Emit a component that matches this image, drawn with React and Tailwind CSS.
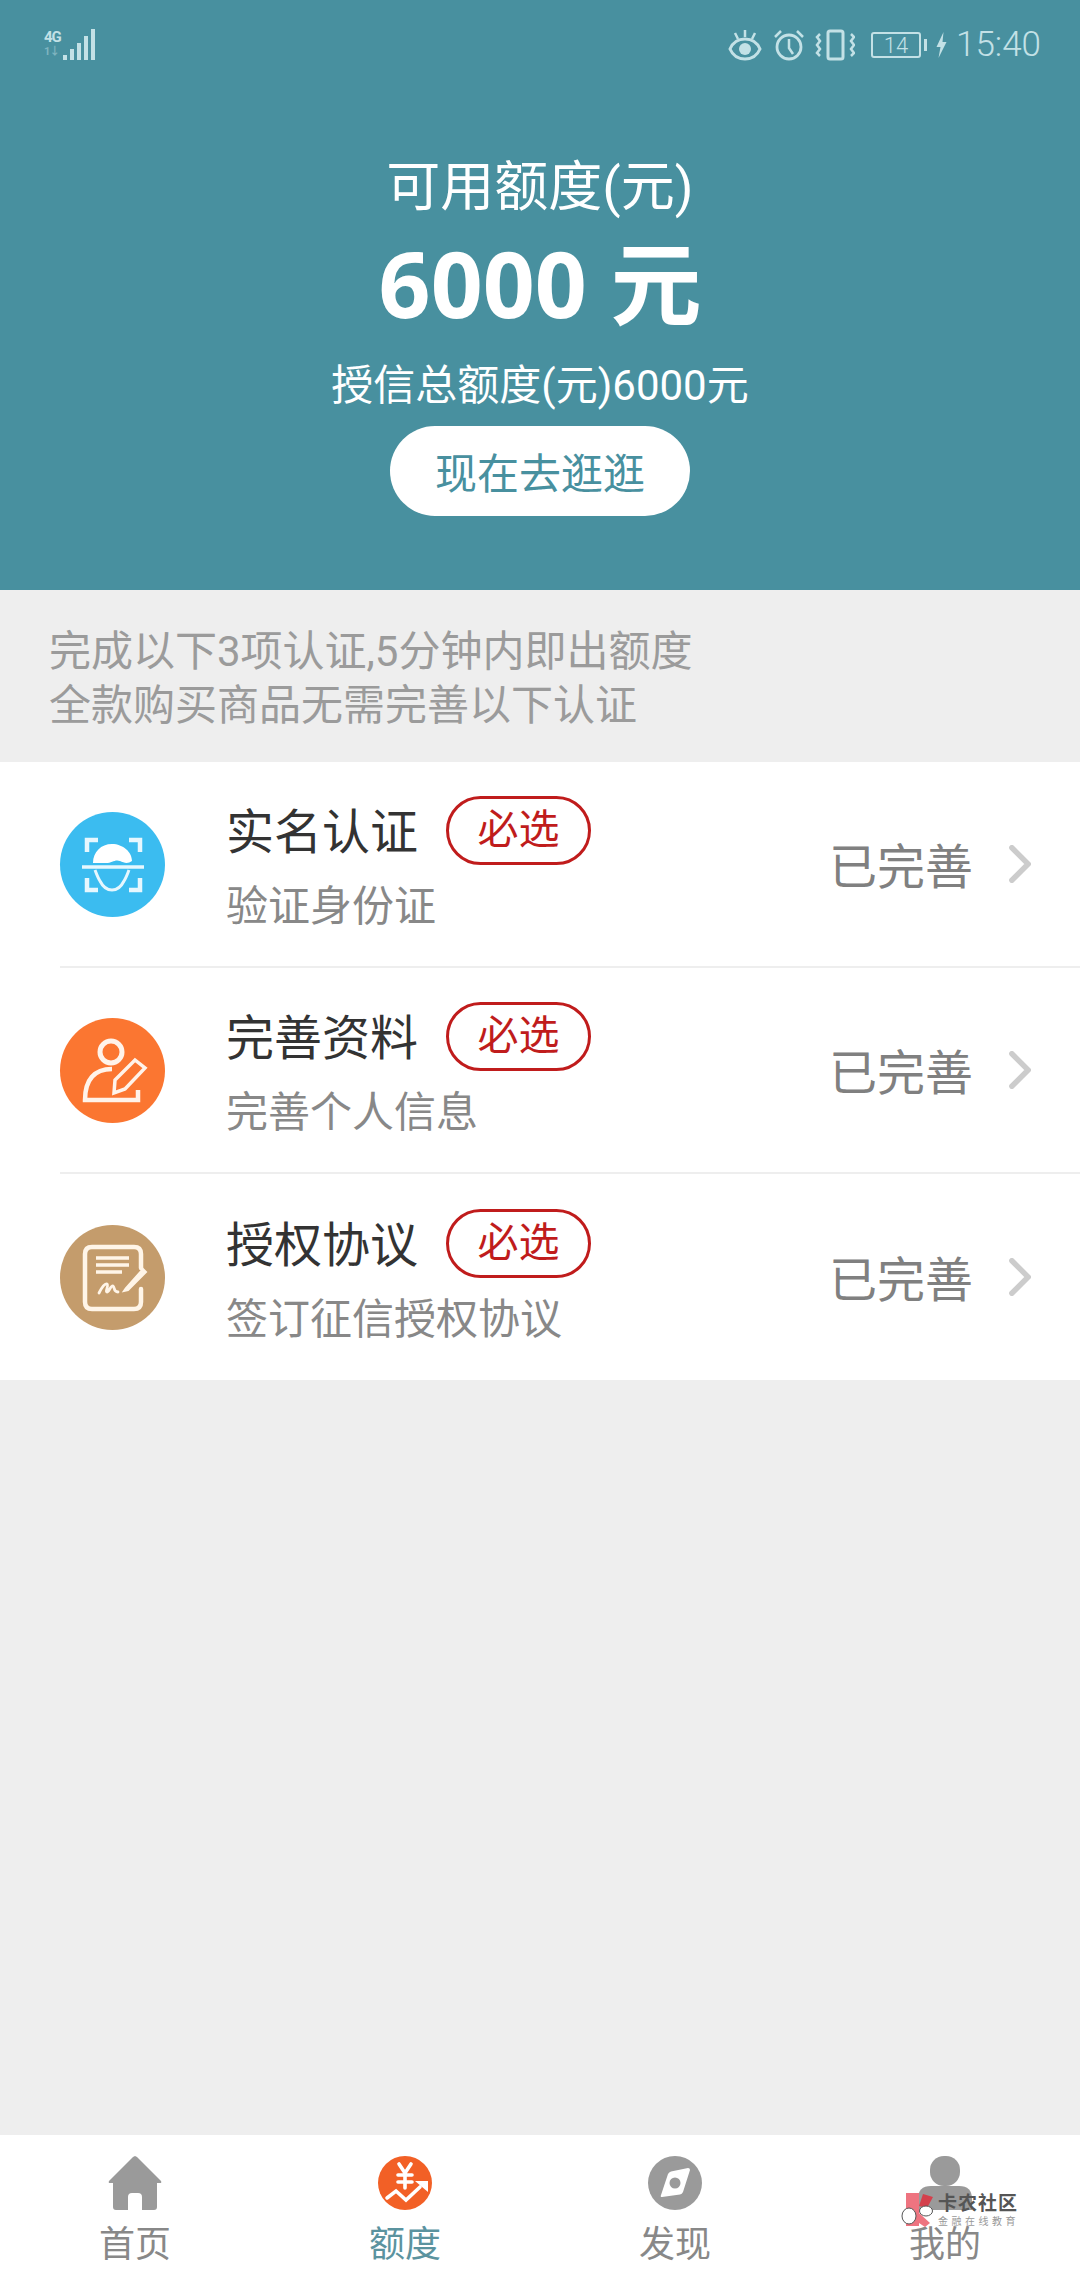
import React from "react";

const rows = [
  { title: "实名认证", sub: "验证身份证", icon: FaceIcon, color: "bg-[#3bbcf0]" },
  { title: "完善资料", sub: "完善个人信息", icon: ProfileIcon, color: "bg-[#fb7631]" },
  { title: "授权协议", sub: "签订征信授权协议", icon: SignIcon, color: "bg-[#c49c6c]" },
];

const tabs = [
  { label: "首页", icon: HomeTab },
  { label: "额度", icon: QuotaTab, active: true },
  { label: "发现", icon: CompassTab },
  { label: "我的", icon: UserTab },
];

function FaceIcon() {
  return (
    <svg viewBox="0 0 105 105" className="w-[105px] h-[105px]" fill="none" stroke="#e6f7fe" strokeWidth="4.500">
      <path d="M38 28H27v12M69 28h11v12M27 66v12h11M80 66v12H69" />
      <path d="M33 51c0-11 8-19 19-19s20 8 20 17c-4 3-8 2-12 0-5-2-8 2-14 2z" fill="#fff" stroke="none" />
      <path d="M22 55h62" strokeWidth="3.500" />
      <path d="M35 58c2 5 3 8 5 11 3 6 7 9 12 9s9-3 12-9c2-3 3-6 5-11" strokeWidth="3" />
    </svg>
  );
}

function ProfileIcon() {
  return (
    <svg viewBox="0 0 105 105" className="w-[105px] h-[105px]" fill="none" stroke="#fff3ea" strokeWidth="4.500">
      <circle cx="51" cy="34" r="11" strokeWidth="5" />
      <path d="M52 51c-18 0-27 11-27 31h53V72" />
      <path d="M55 62l20-20 10 8-20 21-11 4z" strokeWidth="3.500" />
    </svg>
  );
}

function SignIcon() {
  return (
    <svg viewBox="0 0 105 105" className="w-[105px] h-[105px]" fill="none" stroke="#fff5e8" strokeWidth="4.500">
      <path d="M81 43V29q0-7-7-7H32q-7 0-7 7v48q0 7 7 7h42q7 0 7-7V64" strokeLinecap="round" />
      <path d="M36 33h33M36 40h33M36 47h26" strokeWidth="3.500" />
      <path d="M39 68c3-6 6-10 8-9s-2 8 0 8 4-7 6-6 0 6 5 6" strokeWidth="2.800" strokeLinecap="round" />
      <path d="M66 63l-2 3 4-1 18-18-3-3z" fill="#fff5e8" strokeWidth="2" />
    </svg>
  );
}

function HomeTab() {
  return (
    <svg viewBox="0 0 54 54" className="w-[54px] h-[54px]" fill="#9a9a9a">
      <path d="M27 0l-2 1L1 25q-1 2 1 2h3v24q0 3 3 3h12V41q0-4 4-4h6q4 0 4 4v13h12q3 0 3-3V27h3q2 0 1-2L29 1z" />
    </svg>
  );
}

function QuotaTab() {
  return (
    <svg viewBox="0 0 54 54" className="w-[54px] h-[54px]" fill="none" stroke="#fff">
      <circle cx="27" cy="27" r="27" fill="#f26026" stroke="none" />
      <path d="M21 8l6 9 6-9M20 19h14M20 26h14M27 17v15" strokeWidth="3.600" strokeLinecap="round" />
      <path d="M9 42l9-7 10 9 14-13" strokeWidth="3.600" strokeLinecap="round" />
      <path d="M37 25h13v11z" fill="#fff" stroke="none" />
    </svg>
  );
}

function CompassTab() {
  return (
    <svg viewBox="0 0 54 54" className="w-[54px] h-[54px]">
      <circle cx="27" cy="27" r="27" fill="#9a9a9a" />
      <path d="M42 14L35 36q-1 2-3 2.500L14 41q-2 0-1-2l7-21q1-2 3-2.500L40 12q2 0 2 2z" fill="#fff" />
      <circle cx="27" cy="27" r="5.500" fill="#9a9a9a" />
    </svg>
  );
}

function UserTab() {
  return (
    <svg viewBox="0 0 54 54" className="w-[54px] h-[54px]" fill="#9a9a9a">
      <rect x="12" y="0" width="30" height="30" rx="14" />
      <path d="M13 30h28q13 0 13 13v11H0V43q0-13 13-13z" />
    </svg>
  );
}

function StatusIcons() {
  return (
    <svg viewBox="0 0 127 32" className="w-[127px] h-[32px]" fill="none" stroke="#c3e1e6" strokeWidth="2.500">
      {/* eye */}
      <path d="M2 20c3-7 9-10 15-10s12 3 15 10c-3 7-9 10-15 10S5 27 2 20z" strokeWidth="3" />
      <circle cx="17" cy="20" r="6" fill="#c3e1e6" stroke="none" />
      <path d="M17 1v7M7 4l3 6M27 4l-3 6" />
      {/* alarm */}
      <circle cx="61" cy="18" r="12" strokeWidth="2.800" />
      <path d="M61 10v9l4 6M47 8l6-6M75 8l-6-6" />
      {/* vibrate */}
      <rect x="100" y="2" width="15" height="28" rx="2" strokeWidth="3" />
      <path d="M92 5l-3 3 3 4-3 4 3 4-3 4 3 3M123 5l3 3-3 4 3 4-3 4 3 4-3 3" />
    </svg>
  );
}

function Watermark() {
  return (
    <div className="absolute left-[901px] top-[2193px] flex items-start gap-[5px]">
      <svg viewBox="0 0 32 34" className="w-[32px] h-[34px]">
        <path d="M5 0h13v33H5z" fill="#ee7480" />
        <path d="M18 13L22 1l10 3-6 11z" fill="#d4404c" />
        <path d="M18 20l11 10-5 4-6-4z" fill="#ee7480" />
        <ellipse cx="8" cy="23" rx="7" ry="8" fill="#fff" stroke="#555" strokeWidth="1" />
        <ellipse cx="25" cy="18" rx="6.500" ry="5" fill="#fff" stroke="#555" strokeWidth="1" />
      </svg>
      <div className="flex flex-col items-start pt-[1px]">
        <span className="text-[19px] leading-[20px] font-bold tracking-[1px] text-[#555]">卡农社区</span>
        <span className="mt-[2px] text-[10px] leading-[12px] tracking-[3.500px] text-[#999]">金融在线教育</span>
      </div>
    </div>
  );
}

export default function App() {
  return (
    <div className="relative w-[1080px] h-[2280px] flex flex-col bg-[#eeeeee] font-['Roboto','Noto_Sans_CJK_SC',sans-serif]">
      <div className="h-[590px] bg-[#48909f] flex flex-col items-center text-white">
        <div className="w-full h-[90px] flex justify-between pl-[44px] pr-[39px] pt-[29px]">
          <div className="flex items-start gap-[1px]">
            <div className="flex flex-col w-[18px] text-[15px] leading-[16px] font-bold tracking-[-1px] text-[#c3e1e6]">
              <span>4G</span>
              <span className="text-[11px] leading-[14px] text-[#7fb4bf]">1↓</span>
            </div>
            <div className="flex items-end gap-[3px] h-[31px]">
              <span className="w-[4px] h-[5px] bg-[#c3e1e6]" />
              <span className="w-[4px] h-[11px] bg-[#c3e1e6]" />
              <span className="w-[4px] h-[17px] bg-[#c3e1e6]" />
              <span className="w-[4px] h-[24px] bg-[#c3e1e6]" />
              <span className="w-[4px] h-[31px] bg-[#c3e1e6]" />
            </div>
          </div>
          <div className="flex items-center h-[32px] text-[#c3e1e6]">
            <StatusIcons />
            <div className="ml-[16px] w-[50px] h-[26px] border-2 border-[#c3e1e6] rounded-[3px] flex items-center justify-center text-[22px] font-light">14</div>
            <span className="ml-[3px] w-[3px] h-[12px] bg-[#c3e1e6]" />
            <svg viewBox="0 0 10 26" className="ml-[9px] w-[11px] h-[26px]" fill="#c3e1e6">
              <path d="M7 0L0 15h4l-2 11 8-16H6z" />
            </svg>
            <span className="ml-[9px] text-[35px] leading-[32px] font-light">15:40</span>
          </div>
        </div>
        <div className="mt-[63px] text-[54px] leading-[70px]">可用额度(元)</div>
        <div className="mt-[10px] text-[91px] leading-[100px] font-bold font-['Open_Sans','Noto_Sans_CJK_SC',sans-serif]">6000 元</div>
        <div className="mt-[25px] text-[42px] leading-[56px]">授信总额度(元)6000元</div>
        <div className="mt-[12px] w-[300px] h-[90px] pt-[6px] rounded-full bg-white flex items-center justify-center text-[42px] text-[#48909f]">现在去逛逛</div>
      </div>

      <div className="h-[172px] pl-[49px] pt-[35px] text-[42px] leading-[54px] text-[#9b9b9b]">
        <div>完成以下3项认证,5分钟内即出额度</div>
        <div>全款购买商品无需完善以下认证</div>
      </div>

      <div className="bg-white pl-[60px]">
        {rows.map((row, i) => (
          <div
            key={row.title}
            className={`h-[206px] flex items-center ${i < rows.length - 1 ? "border-b-2 border-[#eeeeee]" : ""}`}
          >
            <div className={`w-[105px] h-[105px] rounded-full shrink-0 ${row.color}`}>
              <row.icon />
            </div>
            <div className="ml-[61px] pt-[5px] flex-1 flex flex-col">
              <div className="flex items-center h-[70px]">
                <span className="text-[48px] leading-[70px] text-[#333333]">{row.title}</span>
                <span className="ml-[28px] mb-[6px] w-[145px] h-[69px] pt-[2px] rounded-full border-[3px] border-[#c01c1c] flex items-center justify-center text-[41px] text-[#c01c1c]">必选</span>
              </div>
              <div className="mt-[11px] text-[42px] leading-[56px] text-[#888888]">{row.sub}</div>
            </div>
            <span className="pt-[8px] text-[48px] text-[#808080]">已完善</span>
            <svg viewBox="0 0 24 42" className="ml-[36px] mr-[49px] w-[22px] h-[38px]" fill="none" stroke="#cccccc" strokeWidth="6" strokeLinecap="round">
              <path d="M3 3l18 18L3 39" />
            </svg>
          </div>
        ))}
      </div>

      <div className="flex-1" />

      <div className="h-[145px] bg-white grid grid-cols-4">
        {tabs.map((tab) => (
          <div key={tab.label} className="flex flex-col items-center pt-[21px]">
            <tab.icon />
            <span className={`mt-[10px] text-[36px] leading-[50px] ${tab.active ? "text-[#5b939f]" : "text-[#888888]"}`}>{tab.label}</span>
          </div>
        ))}
      </div>

      <Watermark />
    </div>
  );
}
